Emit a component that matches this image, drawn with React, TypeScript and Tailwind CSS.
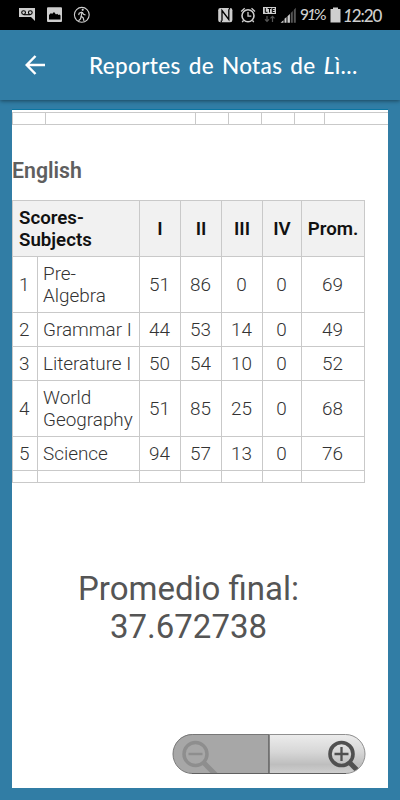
import type { ReactNode } from "react";

const HEADERS = ["I", "II", "III", "IV", "Prom."];

const ROWS = [
  { name: "Pre-\nAlgebra", scores: [51, 86, 0, 0, 69], height: "h-[56px]" },
  { name: "Grammar I", scores: [44, 53, 14, 0, 49], height: "h-[34px]" },
  { name: "Literature I", scores: [50, 54, 10, 0, 52], height: "h-[34px]" },
  { name: "World\nGeography", scores: [51, 85, 25, 0, 68], height: "h-[56px]" },
  { name: "Science", scores: [94, 57, 13, 0, 76], height: "h-[34px]" },
];

function Cell({ children, className = "" }: { children?: ReactNode; className?: string }) {
  return <td className={`border border-[#c9c9c9] p-0 ${className}`}>{children}</td>;
}

function StatusBar() {
  return (
    <div className="flex h-[30px] shrink-0 bg-black text-[#cecece]">
      <svg className="h-[30px] w-[300px]" viewBox="0 0 300 30" fill="none" stroke="currentColor">
        {/* voicemail */}
        <path d="M19 8h16v13l-4-4H19z" fill="currentColor" stroke="none" />
        <g stroke="#000" strokeWidth="1.1">
          <circle cx="23.6" cy="12.6" r="1.9" />
          <circle cx="30.3" cy="12.6" r="1.9" />
          <path d="M23.6 14.7h6.7" />
        </g>
        {/* gallery */}
        <rect x="47" y="7.3" width="15" height="14.7" rx="1" fill="currentColor" stroke="none" />
        <path d="M49 19.5v-4.5l2-2 1 1 2-2 2 2.5 1.2-.8 1.3 1.3 1-.5 1 1v4z" fill="#000" stroke="none" />
        {/* walking */}
        <circle cx="81.8" cy="14.8" r="7.4" strokeWidth="1.1" />
        <circle cx="82.7" cy="9.8" r="1.1" fill="currentColor" stroke="none" />
        <path d="M82 12l-.8 4.2 2 1.6.8 3M81.2 16.2L80.5 19l-2 1.8M82 12l-2.8 1.2-.5 2M82.3 12.3l1.2 2 2 .7" strokeWidth="1.2" />
        {/* nfc */}
        <rect x="218.2" y="8" width="14.2" height="14.2" rx="2.2" fill="currentColor" stroke="none" />
        <path d="M222 20.8V10.5l6.8 9V9.2" stroke="#000" strokeWidth="1.3" />
        <path d="M221.3 22.5v-2M229.5 7.5v2" stroke="#000" strokeWidth="1.3" />
        {/* alarm */}
        <circle cx="248" cy="15.7" r="6" strokeWidth="1.6" />
        <path d="M248 12v4.2h3.3M241.2 11.5l3.5-3.3M251.5 8.2l3.5 3.3M243.5 20.5l-1.3 1.7M252.5 20.5l1.3 1.7" strokeWidth="1.3" />
        {/* lte */}
        <rect x="263" y="7" width="13" height="7" fill="currentColor" stroke="none" />
        <path d="M265.3 8v4.3h2.2M267.7 8.5h3.6M269.5 8.5v4M274.7 8.5h-2.4v4h2.4M272.3 10.5h2.2" stroke="#000" />
        <path d="M267 16v5M265 19.3l2 2 2-2M272.5 22v-5M270.5 18.3l2-2 2 2" stroke="#555" strokeWidth="1.2" />
        {/* signal */}
        <path d="M280.5 22.8l3-2.5v2.5zM284.5 22.8v-4l2-1.8v5.8zM287.5 22.8v-6.5l2.4-2.3v8.8z" fill="currentColor" stroke="none" />
        <path d="M290.8 22.8V13l2-2v11.8zM293.8 22.8V10l2-2.2v15z" fill="#555" stroke="none" />
      </svg>
      <div className="flex w-[100px] items-center font-['Lato',sans-serif]">
        <span className="w-[30px] text-[15.5px] leading-none font-medium tracking-[-2px] whitespace-nowrap">
          9<i>1</i>%
        </span>
        <svg className="h-[16px] w-[11px]" viewBox="0 0 11 16">
          <path d="M3 .5h5V2h2.5v13.5H.5V2H3z" fill="#cecece" />
        </svg>
        <span className="ml-[2px] text-[17px] leading-none font-medium tracking-[-1.1px]">
          <i>1</i>2:20
        </span>
      </div>
    </div>
  );
}

function TopBar() {
  return (
    <header className="relative flex h-[70px] shrink-0 items-center bg-[#317da5] text-white shadow-[0_1px_4px_rgba(0,0,0,0.45)]">
      <svg className="ml-[25px] h-5 w-5" viewBox="0 0 20 20" fill="none" stroke="currentColor" strokeWidth="2.5">
        <path d="M20 10H2M10.5 1L1.7 10l8.8 9" />
      </svg>
      <h1 className="mt-[3px] ml-[44px] font-['Lato',sans-serif] text-[22.5px] leading-none font-medium tracking-[0.35px] [word-spacing:2px] whitespace-nowrap">
        Reportes de Notas de <i>L</i>ì...
      </h1>
    </header>
  );
}

function ScoresTable() {
  return (
    <table className="w-[353px] table-fixed border-collapse text-[18.7px] leading-[22px] text-[#333]">
      <colgroup>
        <col className="w-[25px]" />
        <col className="w-[102px]" />
        <col className="w-[41px]" />
        <col className="w-[41px]" />
        <col className="w-[41px]" />
        <col className="w-[39px]" />
        <col className="w-[63px]" />
      </colgroup>
      <thead>
        <tr className="h-[56px] bg-[#f1f1f1] text-[#111]">
          <th colSpan={2} className="border border-[#c9c9c9] p-0 pl-[6px] text-left font-semibold">
            Scores-
            <br />
            Subjects
          </th>
          {HEADERS.map((header) => (
            <th key={header} className="border border-[#c9c9c9] p-0 font-semibold">
              {header}
            </th>
          ))}
        </tr>
      </thead>
      <tbody className="text-[18.9px] font-[350]">
        {ROWS.map((row, i) => (
          <tr key={row.name} className={row.height}>
            <Cell className="pl-[6px]">{i + 1}</Cell>
            <Cell className="pl-[5px] whitespace-pre">{row.name}</Cell>
            {row.scores.map((score, j) => (
              <Cell key={j} className="pr-px text-center">
                {score}
              </Cell>
            ))}
          </tr>
        ))}
        <tr className="h-[12px]">
          {[0, 1, 2, 3, 4, 5, 6].map((n) => (
            <Cell key={n} />
          ))}
        </tr>
      </tbody>
    </table>
  );
}

function ZoomControls() {
  return (
    <svg className="h-[42px] w-[194px]" viewBox="0 0 194 42" fill="none">
      <defs>
        <linearGradient id="zoomIn" x1="0" y1="0" x2="0" y2="1">
          <stop offset="0" stopColor="#eee" />
          <stop offset=".45" stopColor="#d7d7d7" />
          <stop offset=".75" stopColor="#bebebe" />
          <stop offset="1" stopColor="#d2d2d2" />
        </linearGradient>
        <clipPath id="pill">
          <rect x="1" y="1" width="192" height="39.5" rx="19.7" />
        </clipPath>
      </defs>
      <g clipPath="url(#pill)">
        <path d="M0 0h97v42H0z" fill="#a7a7a7" />
        <path d="M97 0h97v42H97z" fill="url(#zoomIn)" />
        <g stroke="#8e8e8e">
          <circle cx="23.5" cy="21" r="11.5" strokeWidth="3.5" />
          <path d="M16.5 21h14" strokeWidth="2.5" />
          <path d="M31.5 29.5L44 42" strokeWidth="5" />
        </g>
        <g stroke="#505050">
          <circle cx="169.5" cy="21" r="11.5" strokeWidth="3.6" />
          <path d="M162.5 21h14M169.5 14v14" strokeWidth="2.3" />
          <path d="M177.5 29.5L190 42" strokeWidth="5" />
        </g>
      </g>
      <path d="M97 1.5v39" stroke="#555" strokeWidth="1.3" />
      <path d="M97 1.5H20.5a19.5 19.5 0 000 39H97" stroke="#777" />
      <path d="M97 1.5h76.5a19.5 19.5 0 010 39H97" stroke="#909090" />
      <path d="M20 40.5h154" stroke="#606060" />
    </svg>
  );
}

export default function App() {
  return (
    <div className="flex h-[800px] w-[400px] flex-col overflow-hidden bg-[#317da5] font-['Roboto',sans-serif]">
      <StatusBar />
      <TopBar />
      <main className="mt-[9px] ml-[12px] flex h-[679px] w-[376px] shrink-0 flex-col overflow-hidden border-t border-[#0c75a1] bg-white">
        {/* tail of the previous table */}
        <div className="mt-[2px] flex h-[13px] shrink-0 border-y border-l border-[#c9c9c9]">
          <div className="w-[33px] border-r border-[#c9c9c9]" />
          <div className="w-[150px] border-r border-[#c9c9c9]" />
          <div className="w-[33px] border-r border-[#c9c9c9]" />
          <div className="w-[33px] border-r border-[#c9c9c9]" />
          <div className="w-[33px] border-r border-[#c9c9c9]" />
          <div className="w-[30px] border-r border-[#c9c9c9]" />
          <div className="flex-1" />
        </div>
        <h2 className="mt-[33px] text-[21.3px] leading-[26px] font-semibold text-[#5f5f5f]">English</h2>
        <div className="mt-[16px]">
          <ScoresTable />
        </div>
        <p className="mt-[87px] mr-[23px] text-center text-[33px] leading-[38px] text-[#555]">
          Promedio final:
          <br />
          37.672738
        </p>
        <div className="mt-auto mr-[22px] mb-[13px] flex justify-end">
          <ZoomControls />
        </div>
      </main>
    </div>
  );
}
